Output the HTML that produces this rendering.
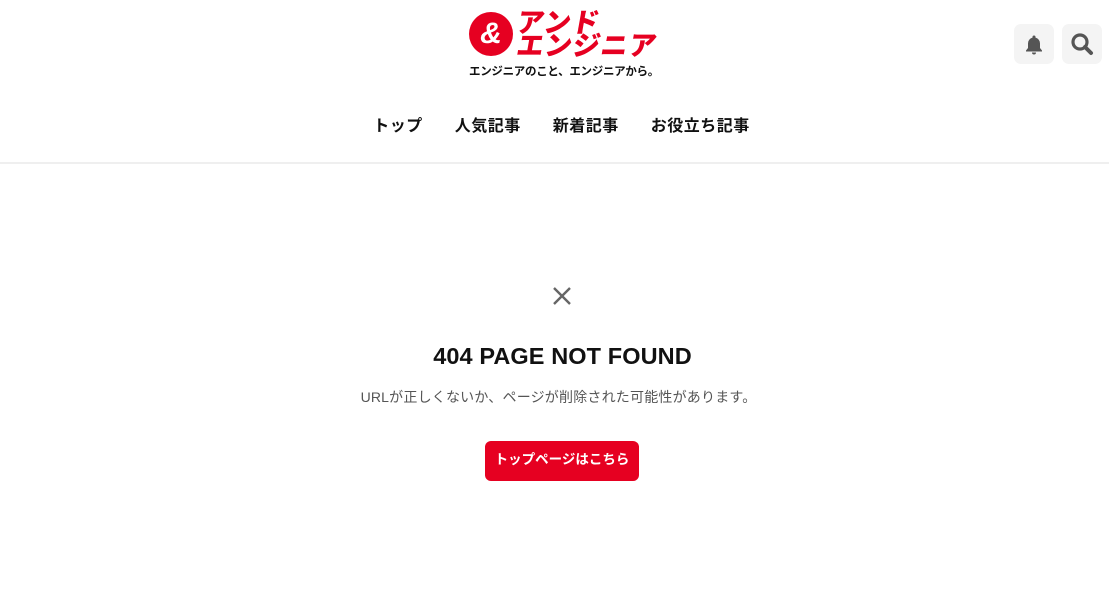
<!DOCTYPE html>
<html><head><meta charset="utf-8"><style>
*{margin:0;padding:0;box-sizing:border-box}
body{width:1109px;height:600px;background:#fff;font-family:"Liberation Sans","Noto Sans CJK JP",sans-serif;position:relative;overflow:hidden;color:#111}
.abs{position:absolute}
.logo1{left:517px;top:10px;font-size:27px;font-weight:900;color:#e60021;line-height:26px;letter-spacing:1px;transform:skewX(-10deg)}
.logo2{left:517px;top:33px;font-size:27px;font-weight:900;color:#e60021;line-height:26px;letter-spacing:1px;transform:skewX(-10deg)}
.tag{left:469px;top:63px;font-size:11.5px;font-weight:700;white-space:nowrap;letter-spacing:-0.3px}
.circ{left:469px;top:12px;width:44px;height:44px;border-radius:50%;background:#e60021;color:#fff;font-size:30px;font-weight:900;text-align:center;line-height:44px;font-style:italic}
.btn{top:24px;width:40px;height:40px;border-radius:7px;background:#f4f4f4}
.nav{top:112px;left:0;width:1109px;text-align:center;font-size:16px;font-weight:700;white-space:nowrap;padding-left:14px}
.nav span{margin:0 16px;letter-spacing:0.5px}
.line{top:162px;left:0;width:1109px;height:2px;background:#efefef}
h1{position:absolute;top:343px;left:0;width:1109px;text-align:center;font-size:23.5px;font-weight:700;color:#111;letter-spacing:0.1px;padding-left:16px}
.sub{top:387px;left:0;width:1109px;text-align:center;font-size:14px;color:#555;letter-spacing:0.2px;padding-left:8px}
.b{left:485px;top:441px;width:154px;height:40px;background:#e60021;border-radius:6px;color:#fff;font-size:13.5px;font-weight:700;text-align:center;line-height:38px}
</style></head><body>
<div class="abs circ">&amp;</div>
<div class="abs logo1">アンド</div>
<div class="abs logo2">エンジニア</div>
<div class="abs tag">エンジニアのこと、エンジニアから。</div>
<div class="abs btn" style="left:1014px"><svg width="40" height="40" viewBox="0 0 40 40"><path d="M20 11.5a1.5 1.5 0 0 1 1.5 1.5v.6a6 6 0 0 1 4.5 5.9v4.5l2 2.5v1H12v-1l2-2.5v-4.5a6 6 0 0 1 4.5-5.9V13a1.5 1.5 0 0 1 1.5-1.5z" fill="#555"/><path d="M18 28.5h4a2 2 0 0 1-4 0z" fill="#555"/></svg></div>
<div class="abs btn" style="left:1062px"><svg width="40" height="40" viewBox="0 0 40 40"><circle cx="18" cy="18" r="7" fill="none" stroke="#555" stroke-width="3.2"/><path d="M23 23l6 6" stroke="#555" stroke-width="4" stroke-linecap="round"/></svg></div>
<div class="abs nav"><span>トップ</span><span>人気記事</span><span>新着記事</span><span>お役立ち記事</span></div>
<div class="abs line"></div>
<svg class="abs" style="left:552px;top:286px" width="20" height="20" viewBox="0 0 20 20"><path d="M2 2L18 18M18 2L2 18" stroke="#666" stroke-width="2.4"/></svg>
<h1>404 PAGE NOT FOUND</h1>
<div class="abs sub">URLが正しくないか、ページが削除された可能性があります。</div>
<div class="abs b">トップページはこちら</div>
</body></html>
